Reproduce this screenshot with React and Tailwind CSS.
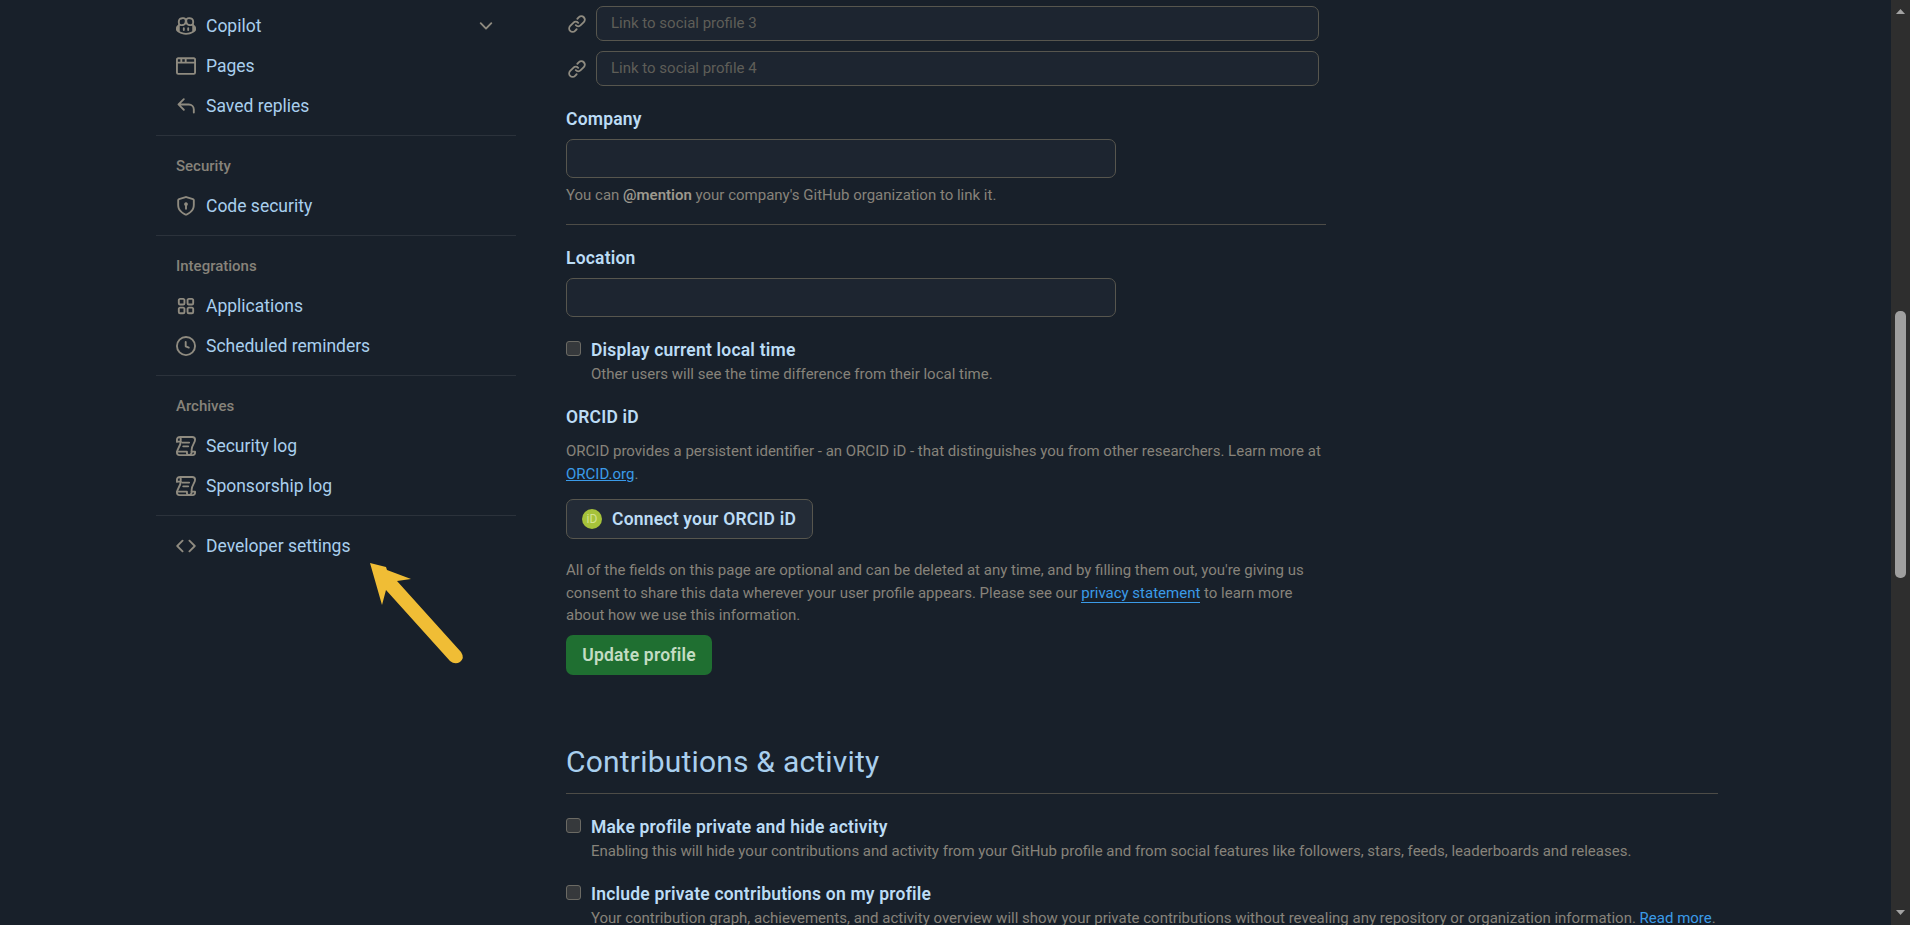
import React from "react";

const Oct = (d) =>
  function OctIcon({ className }) {
    return (
      <svg className={className} viewBox="0 0 16 16" fill="currentColor">
        {d.map((p, i) => (
          <path key={i} fillRule="evenodd" d={p} />
        ))}
      </svg>
    );
  };

const GoCopilot = Oct([
  "M7.998 15.035c-4.562 0-7.873-2.914-7.998-3.749V9.338c.085-.628.677-1.686 1.588-2.065.013-.07.024-.143.036-.218.029-.183.06-.384.126-.612-.201-.508-.254-1.084-.254-1.656 0-.87.128-1.769.693-2.484.579-.733 1.494-1.124 2.724-1.261 1.206-.134 2.262.034 2.944.765.05.053.096.108.139.165.044-.057.094-.112.143-.165.682-.731 1.738-.899 2.944-.765 1.23.137 2.145.528 2.724 1.261.566.715.693 1.614.693 2.484 0 .572-.053 1.148-.254 1.656.066.228.098.429.126.612.012.076.024.148.037.218.924.385 1.522 1.471 1.591 2.095v1.872c0 .766-3.351 3.795-8.002 3.795Zm0-1.485c2.28 0 4.584-1.11 5.002-1.433V7.862l-.023-.116c-.49.21-1.075.291-1.727.291-1.146 0-2.059-.327-2.71-.991A3.222 3.222 0 0 1 8 6.303a3.24 3.24 0 0 1-.544.743c-.65.664-1.563.991-2.71.991-.652 0-1.236-.081-1.727-.291l-.023.116v4.255c.419.323 2.722 1.433 5.002 1.433ZM6.762 2.83c-.193-.206-.637-.413-1.682-.297-1.019.113-1.479.404-1.713.7-.247.312-.369.789-.369 1.554 0 .793.129 1.171.308 1.371.162.181.519.379 1.442.379.853 0 1.339-.235 1.638-.54.315-.322.527-.827.617-1.553.117-.935-.037-1.395-.241-1.614Zm4.155-.297c-1.044-.116-1.488.091-1.681.297-.204.219-.359.679-.242 1.614.091.726.303 1.231.618 1.553.299.305.784.54 1.638.54.922 0 1.28-.198 1.442-.379.179-.2.308-.578.308-1.371 0-.765-.123-1.242-.37-1.554-.233-.296-.693-.587-1.713-.7Z",
  "M6.25 9.037a.75.75 0 0 1 .75.75v1.501a.75.75 0 0 1-1.5 0V9.787a.75.75 0 0 1 .75-.75Zm4.25.75v1.501a.75.75 0 0 1-1.5 0V9.787a.75.75 0 0 1 1.5 0Z",
]);
const GoBrowser = Oct([
  "M0 2.75C0 1.784.784 1 1.75 1h12.5c.966 0 1.75.784 1.75 1.75v10.5A1.75 1.75 0 0 1 14.25 15H1.75A1.75 1.75 0 0 1 0 13.25ZM14.5 6h-13v7.25c0 .138.112.25.25.25h12.5a.25.25 0 0 0 .25-.25Zm-6-3.5v2h6V2.75a.25.25 0 0 0-.25-.25ZM5 2.5v2h2v-2Zm-3.25 0a.25.25 0 0 0-.25.25V4.5h2v-2Z",
]);
const GoReply = Oct([
  "M6.78 1.97a.75.75 0 0 1 0 1.06L3.81 6h6.44A4.75 4.75 0 0 1 15 10.75v2.5a.75.75 0 0 1-1.5 0v-2.5a3.25 3.25 0 0 0-3.25-3.25H3.81l2.97 2.97a.749.749 0 0 1-.326 1.275.749.749 0 0 1-.734-.215L1.47 7.28a.75.75 0 0 1 0-1.06l4.25-4.25a.75.75 0 0 1 1.06 0Z",
]);
const GoShieldLock = Oct([
  "m8.533.133 5.25 1.68A1.75 1.75 0 0 1 15 3.48V7c0 1.566-.32 3.182-1.303 4.682-.983 1.498-2.585 2.813-5.032 3.855a1.697 1.697 0 0 1-1.33 0c-2.447-1.042-4.049-2.357-5.032-3.855C1.32 10.182 1 8.566 1 7V3.48a1.75 1.75 0 0 1 1.217-1.667l5.25-1.68a1.748 1.748 0 0 1 1.066 0Zm-.61 1.429.001.001-5.25 1.68a.251.251 0 0 0-.174.237V7c0 1.36.275 2.666 1.057 3.859.784 1.194 2.121 2.342 4.366 3.298a.196.196 0 0 0 .154 0c2.245-.957 3.582-2.103 4.366-3.297C13.225 9.666 13.5 8.358 13.5 7V3.48a.25.25 0 0 0-.174-.238l-5.25-1.68a.25.25 0 0 0-.153 0ZM9.5 6.5c0 .536-.286 1.032-.75 1.3v2.45a.75.75 0 0 1-1.5 0V7.8A1.5 1.5 0 1 1 9.5 6.5Z",
]);
const GoApps = Oct([
  "M1.5 3.25c0-.966.784-1.75 1.75-1.75h2.5c.966 0 1.75.784 1.75 1.75v2.5A1.75 1.75 0 0 1 5.75 7.5h-2.5A1.75 1.75 0 0 1 1.5 5.75Zm7 0c0-.966.784-1.75 1.75-1.75h2.5c.966 0 1.75.784 1.75 1.75v2.5a1.75 1.75 0 0 1-1.75 1.75h-2.5A1.75 1.75 0 0 1 8.5 5.75Zm-7 7c0-.966.784-1.75 1.75-1.75h2.5c.966 0 1.75.784 1.75 1.75v2.5a1.75 1.75 0 0 1-1.75 1.75h-2.5a1.75 1.75 0 0 1-1.75-1.75Zm7 0c0-.966.784-1.75 1.75-1.75h2.5c.966 0 1.75.784 1.75 1.75v2.5a1.75 1.75 0 0 1-1.75 1.75h-2.5a1.75 1.75 0 0 1-1.75-1.75ZM3.25 3a.25.25 0 0 0-.25.25v2.5c0 .138.112.25.25.25h2.5A.25.25 0 0 0 6 5.75v-2.5A.25.25 0 0 0 5.75 3Zm7 0a.25.25 0 0 0-.25.25v2.5c0 .138.112.25.25.25h2.5a.25.25 0 0 0 .25-.25v-2.5a.25.25 0 0 0-.25-.25Zm-7 7a.25.25 0 0 0-.25.25v2.5c0 .138.112.25.25.25h2.5a.25.25 0 0 0 .25-.25v-2.5a.25.25 0 0 0-.25-.25Zm7 0a.25.25 0 0 0-.25.25v2.5c0 .138.112.25.25.25h2.5a.25.25 0 0 0 .25-.25v-2.5a.25.25 0 0 0-.25-.25Z",
]);
const GoClock = Oct([
  "M8 0a8 8 0 1 1 0 16A8 8 0 0 1 8 0ZM1.5 8a6.5 6.5 0 1 0 13 0 6.5 6.5 0 0 0-13 0Zm7-3.25v2.992l2.028.812a.75.75 0 0 1-.557 1.392l-2.5-1A.751.751 0 0 1 7 8.25v-3.5a.75.75 0 0 1 1.5 0Z",
]);
const GoCode = Oct([
  "m11.28 3.22 4.25 4.25a.75.75 0 0 1 0 1.06l-4.25 4.25a.749.749 0 0 1-1.275-.326.749.749 0 0 1 .215-.734L13.94 8l-3.72-3.72a.749.749 0 0 1 .326-1.275.749.749 0 0 1 .734.215Zm-6.56 0a.751.751 0 0 1 1.042.018.751.751 0 0 1 .018 1.042L2.06 8l3.72 3.72a.749.749 0 0 1-.326 1.275.749.749 0 0 1-.734-.215L.47 8.53a.75.75 0 0 1 0-1.06Z",
]);
const GoLink = Oct([
  "m7.775 3.275 1.25-1.25a3.5 3.5 0 1 1 4.95 4.95l-2.5 2.5a3.5 3.5 0 0 1-4.95 0 .751.751 0 0 1 .018-1.042.751.751 0 0 1 1.042-.018 1.998 1.998 0 0 0 2.83 0l2.5-2.5a2.002 2.002 0 0 0-2.83-2.83l-1.25 1.25a.751.751 0 0 1-1.042-.018.751.751 0 0 1-.018-1.042Zm-4.69 9.64a1.998 1.998 0 0 0 2.83 0l1.25-1.25a.751.751 0 0 1 1.042.018.751.751 0 0 1 .018 1.042l-1.25 1.25a3.5 3.5 0 1 1-4.95-4.95l2.5-2.5a3.5 3.5 0 0 1 4.95 0 .751.751 0 0 1-.018 1.042.751.751 0 0 1-1.042.018 1.998 1.998 0 0 0-2.83 0l-2.5 2.5a1.998 1.998 0 0 0 0 2.83Z",
]);
const GoChevronDown = Oct([
  "M12.78 5.22a.749.749 0 0 1 0 1.06l-4.25 4.25a.749.749 0 0 1-1.06 0L3.22 6.28a.749.749 0 1 1 1.06-1.06L8 8.939l3.72-3.719a.749.749 0 0 1 1.06 0Z",
]);

function GoLog({ className }) {
  return (
    <svg className={className} viewBox="0 0 16 16" fill="none" stroke="currentColor" strokeWidth="1.5" strokeLinecap="round" strokeLinejoin="round">
      <path d="M.75 4.5V3A2.25 2.25 0 0 1 3 .75h10A2.25 2.25 0 0 1 15.25 3c0 2.5-2.75 4.5-2.75 8v2a2.25 2.25 0 0 1-2.25 2.25h-7.5a2 2 0 0 1-2-2c0-2.75 3-5.25 3-8.75V3A2.25 2.25 0 0 0 3 .75" />
      <path d="M.75 4.5h3" />
      <path d="M.75 12.5h8v1a1.75 1.75 0 0 0 1.5 1.75" />
      <path d="M12.5 12.5h2.75v.75a2 2 0 0 1-2 2h-3" />
      <path d="M5.75 8.25h4M5 5.25h5.5" />
    </svg>
  );
}

function Item({ icon: Icon, children, chevron }) {
  return (
    <div className="h-10 flex items-center pl-5 pr-[20px] text-[17.5px] text-[#a9cfee]">
      <Icon className="w-5 h-5 text-[#8f8b80] shrink-0" />
      <span className="ml-[10px] flex-1">{children}</span>
      {chevron && <GoChevronDown className="w-5 h-5 text-[#8f8b80]" />}
    </div>
  );
}

function Group({ label, children }) {
  return (
    <div className="mt-[9px] border-t border-[#2b323b]">
      {label && <div className="h-[50px] pt-[10px] pl-5 flex items-center text-[15px] font-medium text-[#87837a]">{label}</div>}
      {children}
    </div>
  );
}

function Social({ n, className = "" }) {
  return (
    <div className={"flex items-center w-[753px] " + className}>
      <GoLink className="w-5 h-5 text-[#8f8b80] ml-[1px] shrink-0" />
      <div className="ml-[9px] h-[35px] flex-1 rounded-[7px] border border-[#57564e] bg-[#1d2530] flex items-center px-[14px] text-[15px] text-[#5f5e58]">
        Link to social profile {n}
      </div>
    </div>
  );
}

function Check({ label, hint, className }) {
  return (
    <div className={"flex " + className}>
      <div className="w-[15px] h-[15px] rounded-[3px] border border-[#6b6a64] bg-[#36393c] shrink-0" />
      <div className="ml-[10px]">
        <div className="h-[18px] leading-[18px] text-[17.5px] font-semibold tracking-[0.2px] text-[#bcdcf5] whitespace-nowrap">{label}</div>
        <div className="mt-[5px] h-[20px] leading-[20px] text-[15px] text-[#87837a] whitespace-nowrap">{hint}</div>
      </div>
    </div>
  );
}

export default function App() {
  return (
    <div className="relative h-[925px] overflow-hidden flex bg-[#18202a] font-['Roboto',sans-serif]">
      <aside className="w-[360px] ml-[156px] shrink-0 pt-[6px]">
        <Item icon={GoCopilot} chevron>Copilot</Item>
        <Item icon={GoBrowser}>Pages</Item>
        <Item icon={GoReply}>Saved replies</Item>
        <Group label="Security">
          <Item icon={GoShieldLock}>Code security</Item>
        </Group>
        <Group label="Integrations">
          <Item icon={GoApps}>Applications</Item>
          <Item icon={GoClock}>Scheduled reminders</Item>
        </Group>
        <Group label="Archives">
          <Item icon={GoLog}>Security log</Item>
          <Item icon={GoLog}>Sponsorship log</Item>
        </Group>
        <Group>
          <div className="pt-[10px]">
            <Item icon={GoCode}>Developer settings</Item>
          </div>
        </Group>
      </aside>

      <main className="ml-[50px] w-[1152px] shrink-0 pt-[6px]">
        <Social n={3} />
        <Social n={4} className="mt-[10px]" />

        <div className="mt-[22px] h-[22px] leading-[22px] text-[17.5px] font-semibold tracking-[0.2px] text-[#bcdcf5]">Company</div>
        <div className="mt-[9px] w-[550px] h-[39px] rounded-[7px] border border-[#57564e] bg-[#1d2530]" />
        <div className="mt-[7px] h-[20px] leading-[20px] text-[15px] text-[#87837a]">
          You can <span className="font-semibold text-[#9d998e]">@mention</span> your company's GitHub organization to link it.
        </div>
        <div className="mt-[19px] w-[760px] border-t border-[#4d4c47]" />

        <div className="mt-[22px] h-[22px] leading-[22px] text-[17.5px] font-semibold tracking-[0.2px] text-[#bcdcf5]">Location</div>
        <div className="mt-[9px] w-[550px] h-[39px] rounded-[7px] border border-[#57564e] bg-[#1d2530]" />

        <Check className="mt-[24px]" label="Display current local time" hint="Other users will see the time difference from their local time." />

        <div className="mt-[22px] h-[22px] leading-[22px] text-[17.5px] font-semibold tracking-[0.2px] text-[#bcdcf5]">ORCID iD</div>
        <p className="mt-[12px] w-[760px] text-[15px] leading-[22.5px] text-[#87837a]">
          ORCID provides a persistent identifier - an ORCID iD - that distinguishes you from other researchers. Learn more at{" "}
          <span className="text-[#3b9be8] underline">ORCID.org</span>.
        </p>
        <div className="mt-[14px] w-[247px] h-10 rounded-[7px] border border-[#57564e] bg-[#232b36] flex items-center pl-[15px] text-[17.5px] font-semibold tracking-[0.2px] text-[#bcdcf5]">
          <span className="w-5 h-5 rounded-full bg-[#a6c23a] flex items-center justify-center text-[12px] font-normal text-[#d4e394]">iD</span>
          <span className="ml-[10px]">Connect your ORCID iD</span>
        </div>
        <p className="mt-[20px] w-[760px] text-[15px] leading-[22.7px] text-[#87837a]">
          All of the fields on this page are optional and can be deleted at any time, and by filling them out, you're giving us consent to share this data wherever your user profile appears. Please see our{" "}
          <span className="text-[#3b9be8] border-b border-[#3b9be8]">privacy statement</span> to learn more about how we use this information.
        </p>
        <div className="mt-[8px] w-[146px] h-10 rounded-[7px] bg-[#1f6f31] flex items-center justify-center text-[17.5px] font-semibold tracking-[0.2px] text-[#c4ddc4]">
          Update profile
        </div>

        <h2 className="mt-[68px] h-[38px] leading-[38px] text-[30px] font-normal tracking-[0.2px] text-[#a9cfee]">Contributions &amp; activity</h2>
        <div className="mt-[12px] border-t border-[#4d4c47]" />

        <Check className="mt-[24px]" label="Make profile private and hide activity" hint="Enabling this will hide your contributions and activity from your GitHub profile and from social features like followers, stars, feeds, leaderboards and releases." />
        <Check className="mt-[24px]" label="Include private contributions on my profile" hint={<>Your contribution graph, achievements, and activity overview will show your private contributions without revealing any repository or organization information. <span className="text-[#3b9be8]">Read more</span>.</>} />
      </main>

      <div className="absolute right-0 top-0 bottom-0 w-[19px] bg-[#2e2e2e] flex flex-col items-center">
        <svg className="mt-[9px] w-[9px] h-[5px] shrink-0" viewBox="0 0 9 5"><path d="M4.5 0L9 5H0Z" fill="#a3a3a3" /></svg>
        <div className="mt-[297px] w-[11px] h-[267px] rounded-[5px] bg-[#9f9f9f] shrink-0" />
        <svg className="mt-auto mb-[10px] w-[9px] h-[5px] shrink-0" viewBox="0 0 9 5"><path d="M0 0H9L4.5 5Z" fill="#a3a3a3" /></svg>
      </div>

      <svg className="absolute left-[360px] top-[555px] w-[110px] h-[115px]" viewBox="360 555 110 115">
        <path d="M370 563 L386 567 L387 570 L411 579 L397 581 L461 652 Q465 658 460 662 Q455 665 450 661 L386 590 L382 605 Z" fill="#f0bd35" />
      </svg>
    </div>
  );
}
